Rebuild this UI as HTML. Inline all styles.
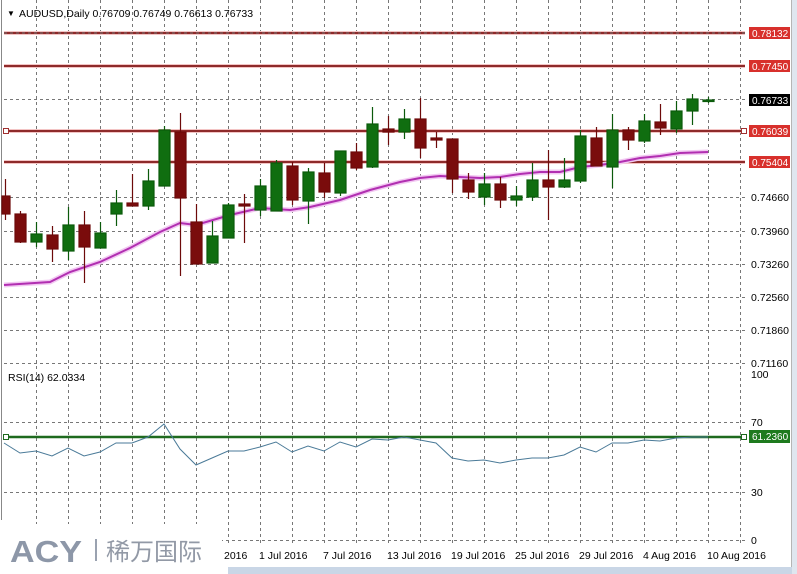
<!DOCTYPE html>
<html><head><meta charset="utf-8"><style>
html,body{margin:0;padding:0;background:#fff;width:797px;height:574px;overflow:hidden}
svg{display:block;font-family:"Liberation Sans","DejaVu Sans",sans-serif}
</style></head><body>
<svg width="797" height="574" viewBox="0 0 797 574" xmlns="http://www.w3.org/2000/svg">
<rect width="797" height="574" fill="#fff"/>
<rect x="792" y="0" width="5" height="574" fill="#dfe6ef"/>
<line x1="791.5" y1="0" x2="791.5" y2="567" stroke="#b5b5b5"/>
<line x1="1.5" y1="0" x2="1.5" y2="520" stroke="#888"/>
<rect x="228" y="567" width="564" height="7" fill="#c9d6e6"/>
<g stroke="#777" stroke-dasharray="3,3" stroke-width="1">
<line x1="36.5" y1="0" x2="36.5" y2="545"/><line x1="68.5" y1="0" x2="68.5" y2="545"/><line x1="100.5" y1="0" x2="100.5" y2="545"/><line x1="132.5" y1="0" x2="132.5" y2="545"/><line x1="164.5" y1="0" x2="164.5" y2="545"/><line x1="196.5" y1="0" x2="196.5" y2="545"/><line x1="228.5" y1="0" x2="228.5" y2="545"/><line x1="260.5" y1="0" x2="260.5" y2="545"/><line x1="292.5" y1="0" x2="292.5" y2="545"/><line x1="324.5" y1="0" x2="324.5" y2="545"/><line x1="356.5" y1="0" x2="356.5" y2="545"/><line x1="388.5" y1="0" x2="388.5" y2="545"/><line x1="420.5" y1="0" x2="420.5" y2="545"/><line x1="452.5" y1="0" x2="452.5" y2="545"/><line x1="484.5" y1="0" x2="484.5" y2="545"/><line x1="516.5" y1="0" x2="516.5" y2="545"/><line x1="548.5" y1="0" x2="548.5" y2="545"/><line x1="580.5" y1="0" x2="580.5" y2="545"/><line x1="612.5" y1="0" x2="612.5" y2="545"/><line x1="644.5" y1="0" x2="644.5" y2="545"/><line x1="676.5" y1="0" x2="676.5" y2="545"/><line x1="708.5" y1="0" x2="708.5" y2="545"/><line x1="740.5" y1="0" x2="740.5" y2="545"/>
<line x1="4" y1="99.5" x2="745" y2="99.5"/><line x1="4" y1="197.5" x2="745" y2="197.5"/><line x1="4" y1="231.5" x2="745" y2="231.5"/><line x1="4" y1="264.5" x2="745" y2="264.5"/><line x1="4" y1="297.5" x2="745" y2="297.5"/><line x1="4" y1="330.5" x2="745" y2="330.5"/><line x1="4" y1="363.5" x2="745" y2="363.5"/><line x1="4" y1="422.5" x2="745" y2="422.5"/><line x1="4" y1="492.5" x2="745" y2="492.5"/><line x1="4" y1="540.5" x2="745" y2="540.5"/>
</g>
<g stroke="#f3c4c4" stroke-width="4"><line x1="4" y1="33" x2="745" y2="33"/><line x1="4" y1="66" x2="745" y2="66"/><line x1="4" y1="131" x2="745" y2="131"/><line x1="4" y1="162" x2="745" y2="162"/></g>
<g stroke="#8e2a2a" stroke-width="2"><line x1="4" y1="33" x2="745" y2="33"/><line x1="4" y1="66" x2="745" y2="66"/><line x1="4" y1="131" x2="745" y2="131"/><line x1="4" y1="162" x2="745" y2="162"/></g>
<line x1="4" y1="33" x2="745" y2="33" stroke="#777" stroke-dasharray="3,3"/>
<rect x="3.5" y="128.5" width="5" height="5" fill="#fff" stroke="#a03030"/>
<rect x="741.5" y="128.5" width="5" height="5" fill="#fff" stroke="#a03030"/>
<polyline fill="none" stroke="#f2c8f2" stroke-width="5" points="4,285 50,282 70,272 100,262 130,248 160,232 180,223 196,225 230,215 260,208 290,210 310,207 340,200 370,190 400,182 420,178 440,176 460,177 480,178 500,177 520,174 540,172 560,172 580,167 600,165 620,162 640,158 660,156 680,153 708,152"/>
<polyline fill="none" stroke="#b12fb1" stroke-width="2" points="4,285 50,282 70,272 100,262 130,248 160,232 180,223 196,225 230,215 260,208 290,210 310,207 340,200 370,190 400,182 420,178 440,176 460,177 480,178 500,177 520,174 540,172 560,172 580,167 600,165 620,162 640,158 660,156 680,153 708,152"/>
<g stroke-width="1.2">
<g stroke="#6d0a0a" fill="#7a0c0c">
<line x1="5.5" y1="179" x2="5.5" y2="220"/><rect x="2" y="196" width="8" height="18"/>
<line x1="20.5" y1="211" x2="20.5" y2="243"/><rect x="15" y="214" width="11" height="28"/>
<line x1="52.5" y1="226" x2="52.5" y2="262"/><rect x="47" y="235" width="11" height="14"/>
<line x1="84.5" y1="211" x2="84.5" y2="283"/><rect x="79" y="225" width="11" height="22"/>
<line x1="132.5" y1="174" x2="132.5" y2="206"/><rect x="127" y="203" width="11" height="3"/>
<line x1="180.5" y1="113" x2="180.5" y2="276"/><rect x="175" y="132" width="11" height="66"/>
<line x1="196.5" y1="204" x2="196.5" y2="264"/><rect x="191" y="222" width="11" height="42"/>
<line x1="244.5" y1="194" x2="244.5" y2="243"/><rect x="239" y="204" width="11" height="2"/>
<line x1="292.5" y1="162" x2="292.5" y2="205"/><rect x="287" y="166" width="11" height="34"/>
<line x1="324.5" y1="163" x2="324.5" y2="198"/><rect x="319" y="173" width="11" height="19"/>
<line x1="356.5" y1="143" x2="356.5" y2="170"/><rect x="351" y="152" width="11" height="16"/>
<line x1="388.5" y1="116" x2="388.5" y2="145"/><rect x="383" y="129" width="11" height="3"/>
<line x1="420.5" y1="98" x2="420.5" y2="158"/><rect x="415" y="119" width="11" height="29"/>
<line x1="436.5" y1="132" x2="436.5" y2="148"/><rect x="431" y="138" width="11" height="2"/>
<line x1="452.5" y1="139" x2="452.5" y2="193"/><rect x="447" y="139" width="11" height="40"/>
<line x1="468.5" y1="173" x2="468.5" y2="199"/><rect x="463" y="180" width="11" height="12"/>
<line x1="500.5" y1="177" x2="500.5" y2="208"/><rect x="495" y="184" width="11" height="16"/>
<line x1="548.5" y1="150" x2="548.5" y2="220"/><rect x="543" y="180" width="11" height="7"/>
<line x1="596.5" y1="127" x2="596.5" y2="166"/><rect x="591" y="138" width="11" height="28"/>
<line x1="628.5" y1="127" x2="628.5" y2="150"/><rect x="623" y="130" width="11" height="10"/>
<line x1="660.5" y1="104" x2="660.5" y2="135"/><rect x="655" y="122" width="11" height="6"/>
</g>
<g stroke="#0b5a0b" fill="#106e10">
<line x1="36.5" y1="222" x2="36.5" y2="247"/><rect x="31" y="234" width="11" height="8"/>
<line x1="68.5" y1="207" x2="68.5" y2="260"/><rect x="63" y="225" width="11" height="26"/>
<line x1="100.5" y1="222" x2="100.5" y2="248"/><rect x="95" y="233" width="11" height="15"/>
<line x1="116.5" y1="190" x2="116.5" y2="226"/><rect x="111" y="203" width="11" height="11"/>
<line x1="148.5" y1="169" x2="148.5" y2="210"/><rect x="143" y="181" width="11" height="25"/>
<line x1="164.5" y1="126" x2="164.5" y2="186"/><rect x="159" y="130" width="11" height="56"/>
<line x1="212.5" y1="221" x2="212.5" y2="263"/><rect x="207" y="236" width="11" height="27"/>
<line x1="228.5" y1="203" x2="228.5" y2="238"/><rect x="223" y="205" width="11" height="33"/>
<line x1="260.5" y1="179" x2="260.5" y2="216"/><rect x="255" y="186" width="11" height="24"/>
<line x1="276.5" y1="160" x2="276.5" y2="211"/><rect x="271" y="163" width="11" height="48"/>
<line x1="308.5" y1="168" x2="308.5" y2="224"/><rect x="303" y="172" width="11" height="29"/>
<line x1="340.5" y1="151" x2="340.5" y2="196"/><rect x="335" y="151" width="11" height="42"/>
<line x1="372.5" y1="107" x2="372.5" y2="168"/><rect x="367" y="124" width="11" height="43"/>
<line x1="404.5" y1="109" x2="404.5" y2="139"/><rect x="399" y="119" width="11" height="13"/>
<line x1="484.5" y1="173" x2="484.5" y2="205"/><rect x="479" y="184" width="11" height="13"/>
<line x1="516.5" y1="186" x2="516.5" y2="206"/><rect x="511" y="196" width="11" height="4"/>
<line x1="532.5" y1="163" x2="532.5" y2="201"/><rect x="527" y="180" width="11" height="17"/>
<line x1="564.5" y1="158" x2="564.5" y2="188"/><rect x="559" y="180" width="11" height="7"/>
<line x1="580.5" y1="130" x2="580.5" y2="183"/><rect x="575" y="136" width="11" height="45"/>
<line x1="612.5" y1="114" x2="612.5" y2="188"/><rect x="607" y="130" width="11" height="37"/>
<line x1="644.5" y1="114" x2="644.5" y2="143"/><rect x="639" y="121" width="11" height="20"/>
<line x1="676.5" y1="101" x2="676.5" y2="133"/><rect x="671" y="111" width="11" height="18"/>
<line x1="692.5" y1="94" x2="692.5" y2="125"/><rect x="687" y="99" width="11" height="12"/>
<line x1="708.5" y1="97" x2="708.5" y2="103"/><rect x="703" y="100" width="11" height="1.5"/>
</g>
</g>
<line x1="4" y1="437" x2="745" y2="437" stroke="#1e6a1e" stroke-width="2.5"/>
<rect x="3.5" y="434.5" width="5" height="5" fill="#fff" stroke="#1e6a1e"/>
<rect x="741.5" y="434.5" width="5" height="5" fill="#fff" stroke="#1e6a1e"/>
<polyline fill="none" stroke="#4a7a98" stroke-width="1" points="4,443 20,453 36,451 52,456 68,448 84,456 100,452 116,443 132,443 148,437 164,424 180,449 196,465 212,458 228,451 244,451 260,447 276,442 292,452 308,446 324,451 340,442 356,447 372,439 388,440 404,437 420,440 436,443 452,458 468,461 484,460 500,463 516,460 532,458 548,458 564,455 580,447 596,452 612,443 628,443 644,440 660,441 676,438 692,437 708,437"/>
<g font-size="10.5" fill="#000">
<text x="7" y="16" font-size="8">▼</text>
<text x="19" y="17">AUDUSD,Daily  0.76709 0.76749 0.76613 0.76733</text>
<text x="8" y="381">RSI(14) 62.0334</text>
<text x="751" y="201">0.74660</text><text x="751" y="235">0.73960</text><text x="751" y="268">0.73260</text><text x="751" y="301">0.72560</text><text x="751" y="334">0.71860</text><text x="751" y="367">0.71160</text>
<text x="751" y="378">100</text><text x="751" y="426">70</text><text x="751" y="496">30</text><text x="751" y="544">0</text>
<text x="224" y="559">2016</text><text x="259" y="559">1 Jul 2016</text><text x="323" y="559">7 Jul 2016</text><text x="387" y="559">13 Jul 2016</text><text x="451" y="559">19 Jul 2016</text><text x="515" y="559">25 Jul 2016</text><text x="579" y="559">29 Jul 2016</text><text x="643" y="559">4 Aug 2016</text><text x="707" y="559">10 Aug 2016</text>
</g>
<g font-size="10" fill="#fff">
<rect x="749" y="27" width="41" height="12" fill="#d8302c"/><text x="752" y="37">0.78132</text>
<rect x="749" y="60" width="41" height="12" fill="#d8302c"/><text x="752" y="70">0.77450</text>
<rect x="749" y="94" width="41" height="12" fill="#000"/><text x="752" y="104">0.76733</text>
<rect x="749" y="125" width="41" height="12" fill="#d8302c"/><text x="752" y="135">0.76039</text>
<rect x="749" y="156" width="41" height="12" fill="#d8302c"/><text x="752" y="166">0.75404</text>
<rect x="749" y="430" width="41" height="13" fill="#1e7a1e"/><text x="752" y="440">61.2360</text>
</g>
<rect x="0" y="524" width="222" height="50" fill="#fff"/>
<text x="10" y="562" font-size="31" font-weight="bold" fill="#8d97a8" font-family="Liberation Sans, sans-serif" textLength="72" lengthAdjust="spacingAndGlyphs">ACY</text>
<rect x="95" y="539" width="2" height="22" fill="#9aa2b0"/>
<text x="106" y="560" font-size="24" fill="#9299a6" font-family="'Liberation Sans','Noto Sans CJK SC',sans-serif">稀万国际</text>
</svg>
</body></html>
